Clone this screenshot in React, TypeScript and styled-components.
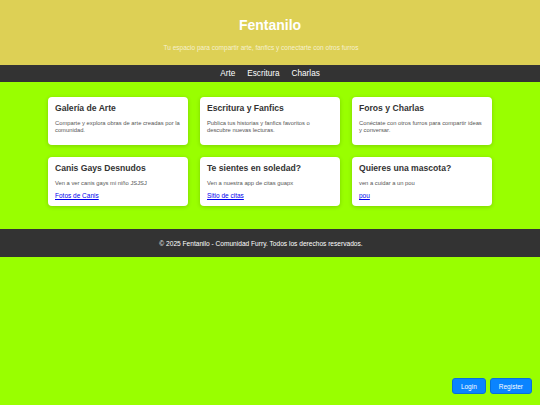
import React from "react";
import styled, { createGlobalStyle } from "styled-components";

const Global = createGlobalStyle`
  html, body { margin: 0; padding: 0; }
  body {
    background: #99ff00;
    font-family: "Liberation Sans", Arial, sans-serif;
    min-height: 405px;
  }
`;

const Header = styled.header`
  background: #ddd055;
  color: #fff;
  height: 65px;
  box-sizing: border-box;
  padding-top: 17px;
  text-align: center;
`;

const Title = styled.h1`
  margin: 0;
  font-size: 14px;
  line-height: 16px;
  font-weight: bold;
`;

const Subtitle = styled.p`
  margin: 11px 0 0;
  padding-right: 18px;
  font-size: 6.5px;
  line-height: 8px;
  color: #f6f1d0;
`;

const Nav = styled.nav`
  background: #333;
  height: 17px;
  display: flex;
  justify-content: center;
  align-items: center;
  gap: 12px;
`;

const NavLink = styled.a`
  color: #fff;
  font-size: 8.2px;
  text-decoration: none;
`;

const Main = styled.main`
  display: grid;
  grid-template-columns: repeat(3, 140px);
  gap: 12px;
  justify-content: center;
  padding: 15px 0 23px;
`;

const Card = styled.section`
  background: #fff;
  border-radius: 4px;
  box-shadow: 0 1px 4px rgba(0, 0, 0, 0.18);
  padding: 6px 7px 6px;
  min-height: 48px;
  box-sizing: border-box;
  display: flex;
  flex-direction: column;
  align-items: flex-start;
  font-size: 6px;
`;

const CardTitle = styled.h2`
  margin: 0;
  font-size: 8.6px;
  line-height: 11px;
  color: #333;
`;

const CardText = styled.p`
  margin: 6px 0 0;
  font-size: 5.8px;
  line-height: 7px;
  color: #555;
`;

const CardLink = styled.a`
  margin-top: 5px;
  font-size: 6.5px;
  line-height: 8px;
  color: #0000ee;
  text-decoration: underline;
`;

const Footer = styled.footer`
  background: #333;
  color: #fff;
  height: 28px;
  padding-right: 18px;
  display: flex;
  align-items: center;
  justify-content: center;
  font-size: 6.6px;
`;

const AuthBar = styled.div`
  position: fixed;
  right: 8px;
  bottom: 11px;
  display: flex;
  gap: 4px;
`;

const AuthButton = styled.button`
  background: #0a84ff;
  color: #fff;
  border: 1px solid #0870d8;
  border-radius: 3px;
  height: 16px;
  padding: 0 8px;
  font-family: "Liberation Sans", Arial, sans-serif;
  font-size: 6.5px;
  cursor: pointer;
`;

const cards = [
  { t: "Galería de Arte", d: "Comparte y explora obras de arte creadas por la comunidad." },
  { t: "Escritura y Fanfics", d: "Publica tus historias y fanfics favoritos o descubre nuevas lecturas." },
  { t: "Foros y Charlas", d: "Conéctate con otros furros para compartir ideas y conversar." },
  { t: "Canis Gays Desnudos", d: "Ven a ver canis gays mi niño JSJSJ", l: "Fotos de Canis" },
  { t: "Te sientes en soledad?", d: "Ven a nuestra app de citas guapx", l: "Sitio de citas" },
  { t: "Quieres una mascota?", d: "ven a cuidar a un pou", l: "pou" },
];

export default function App() {
  return (
    <>
      <Global />
      <Header>
        <Title>Fentanilo</Title>
        <Subtitle>Tu espacio para compartir arte, fanfics y conectarte con otros furros</Subtitle>
      </Header>
      <Nav>
        <NavLink href="#">Arte</NavLink>
        <NavLink href="#">Escritura</NavLink>
        <NavLink href="#">Charlas</NavLink>
      </Nav>
      <Main>
        {cards.map((c) => (
          <Card key={c.t}>
            <CardTitle>{c.t}</CardTitle>
            <CardText>{c.d}</CardText>
            {c.l && <CardLink href="#">{c.l}</CardLink>}
          </Card>
        ))}
      </Main>
      <Footer>© 2025 Fentanilo - Comunidad Furry. Todos los derechos reservados.</Footer>
      <AuthBar>
        <AuthButton>Login</AuthButton>
        <AuthButton>Register</AuthButton>
      </AuthBar>
    </>
  );
}
